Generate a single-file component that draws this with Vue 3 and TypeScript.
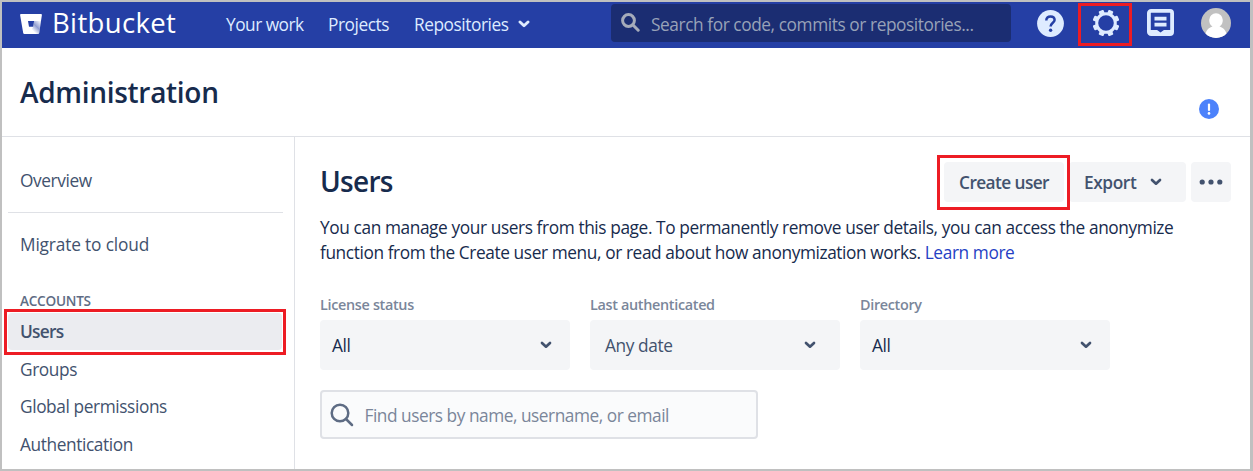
<script setup lang="ts">
interface Filter {
  label: string
  value: string
  kind: string
}

const accountLinks: string[] = ['Groups', 'Global permissions', 'Authentication']
const filters: Filter[] = [
  { label: 'License status', value: 'All', kind: 'status' },
  { label: 'Last authenticated', value: 'Any date', kind: 'date' },
  { label: 'Directory', value: 'All', kind: 'directory' },
]
</script>

<template>
  <div class="page">
    <header class="navbar">
      <svg class="logo" width="22" height="21" viewBox="0 0 22 21">
        <defs>
          <linearGradient id="bucketShade" x1="20" y1="8" x2="12" y2="16" gradientUnits="userSpaceOnUse">
            <stop offset="0" stop-color="#253fa5" stop-opacity="0.1" />
            <stop offset="0.5" stop-color="#253fa5" stop-opacity="0.5" />
            <stop offset="1" stop-color="#253fa5" stop-opacity="0" />
          </linearGradient>
        </defs>
        <path fill-rule="evenodd" d="M1 0H21Q22 0 21.9 1L19.2 19Q19 20 18 20H4.4Q3.4 20 3.2 19L0.1 1Q0 0 1 0ZM8 7L9 12.8H13.2L14.1 7Z" fill="#fff" />
        <path d="M14.1 7H21L19.2 19Q19 20 18 20H9L13.2 12.8Z" fill="url(#bucketShade)" />
      </svg>
      <span class="brand">Bitbucket</span>
      <nav class="nav-links">
        <a class="work">Your work</a>
        <a class="projects">Projects</a>
        <a class="repos">Repositories</a>
        <svg class="nav-chevron" width="12" height="8" viewBox="0 0 12 8"><path d="M2 2l4 3.7L10 2" /></svg>
      </nav>
      <div class="nav-search">
        <svg width="19" height="19" viewBox="0 0 19 19"><circle cx="7.5" cy="7.5" r="5.9" /><path d="M12 12l5.2 5.2" /></svg>
        <span>Search for code, commits or repositories...</span>
      </div>
      <div class="nav-icons">
        <svg class="help" width="27" height="27" viewBox="0 0 27 27">
          <circle cx="13.5" cy="13.5" r="13.4" fill="#deebff" />
          <path d="M9.3 10.5C9.3 7.9 11 6.5 13.5 6.5S17.6 8 17.6 10C17.6 12.8 13.6 12.8 13.6 16.6" fill="none" stroke="#253fa5" stroke-width="2.5" />
          <circle cx="13.6" cy="20.2" r="1.7" fill="#253fa5" />
        </svg>
        <span class="gear-frame">
          <svg width="26" height="26" viewBox="-13 -13 26 26">
            <g fill="#deebff">
              <rect v-for="n in 8" :key="n" x="-2.6" y="-13.4" width="5.2" height="5" rx="1" :transform="`rotate(${n * 45 - 22.5})`" />
            </g>
            <circle r="9.3" fill="none" stroke="#deebff" stroke-width="3" />
          </svg>
        </span>
        <svg class="feed" width="27" height="27" viewBox="0 0 27 27">
          <rect x="1.9" y="1.9" width="23.2" height="23.2" rx="2.2" fill="none" stroke="#deebff" stroke-width="3.8" />
          <path d="M3 21H10.2L13.5 23.6 16.8 21H24V22H18.5L15.5 24.6H11.5L8.5 22H3Z" fill="#deebff" />
          <path d="M3 21.3H24V25H3Z" fill="#deebff" />
          <path d="M10.2 21H16.8L13.5 23.4Z" fill="#253fa5" />
          <path d="M7.5 9.6H19.5M7.5 15.6H19.5" stroke="#deebff" stroke-width="3.8" />
        </svg>
        <svg class="avatar" width="30" height="30" viewBox="0 0 30 30">
          <defs><clipPath id="avatarClip"><circle cx="15" cy="15" r="15" /></clipPath></defs>
          <g clip-path="url(#avatarClip)">
            <rect width="30" height="30" fill="#c1c1c1" />
            <path d="M4 30C4 22 8 20 11.5 18.6 9 17 8.2 14.5 8.2 12A6.8 6.8 0 0 1 21.8 12C21.8 14.5 21 17 18.5 18.6 22 20 26 22 26 30Z" fill="#fff" />
          </g>
        </svg>
      </div>
    </header>

    <section class="title-bar">
      <h1>Administration</h1>
      <svg class="notice" width="20" height="20" viewBox="0 0 20 20">
        <circle cx="10" cy="10" r="10" fill="#4c82fb" />
        <path d="M10 5.6V11" stroke="#fff" stroke-width="2.2" stroke-linecap="round" />
        <circle cx="10" cy="14.4" r="1.3" fill="#fff" />
      </svg>
    </section>

    <div class="body">
      <aside class="sidebar">
        <a class="item overview">Overview</a>
        <div class="divider"></div>
        <a class="item migrate">Migrate to cloud</a>
        <h3>ACCOUNTS</h3>
        <div class="selected"><a class="item active">Users</a></div>
        <a v-for="link in accountLinks" :key="link" class="item">{{ link }}</a>
      </aside>

      <main class="content">
        <div class="heading">
          <h2>Users</h2>
          <div class="actions">
            <div class="create"><button type="button">Create user</button></div>
            <button type="button" class="export">
              <span>Export</span>
              <svg class="chevron" width="12" height="8" viewBox="0 0 12 8"><path d="M2 2l4 3.7L10 2" /></svg>
            </button>
            <button type="button" class="more">
              <svg width="24" height="6" viewBox="0 0 24 6"><circle cx="3.2" cy="3" r="2.6" /><circle cx="12" cy="3" r="2.6" /><circle cx="20.8" cy="3" r="2.6" /></svg>
            </button>
          </div>
        </div>
        <div class="description">
          <p class="line-one">You can manage your users from this page. To permanently remove user details, you can access the anonymize</p>
          <p class="line-two">function from the Create user menu, or read about how anonymization works. <a>Learn more</a></p>
        </div>
        <div class="filters">
          <div v-for="filter in filters" :key="filter.kind" class="filter" :class="filter.kind">
            <label>{{ filter.label }}</label>
            <div class="select">
              <span>{{ filter.value }}</span>
              <svg class="chevron" width="12" height="8" viewBox="0 0 12 8"><path d="M2 2l4 3.7L10 2" /></svg>
            </div>
          </div>
        </div>
        <div class="user-search">
          <svg width="24" height="24" viewBox="0 0 24 24"><circle cx="10" cy="10" r="8.3" /><path d="M16 16l6 6" /></svg>
          <span>Find users by name, username, or email</span>
        </div>
      </main>
    </div>
  </div>
</template>

<style>
body { margin: 0; overflow: hidden; }
</style>

<style scoped>
.page {
  box-sizing: border-box;
  width: 1253px;
  height: 471px;
  border: 2px solid #c0c0c0;
  border-right-width: 3px;
  background: #fff;
  overflow: hidden;
  display: flex;
  flex-direction: column;
  font-family: "Open Sans", "Noto Sans", sans-serif;
  font-size: 17.3px;
  letter-spacing: -0.4px;
  color: #172b4d;
}
.page * { box-sizing: border-box; }
h1, h2, h3, p { margin: 0; }
svg { flex: none; display: block; }
span, a, h1, h2, h3, p, label { white-space: nowrap; }

.navbar { height: 46px; flex: none; display: flex; background: #253fa5; color: #deebff; }
.logo { margin: 12px 0 0 18px; }
.brand { width: 174px; margin-left: 10px; font-size: 27.5px; font-weight: 500; letter-spacing: 0.35px; line-height: 41px; color: #fff; }
.nav-links { width: 385px; display: flex; line-height: 45px; }
.work { width: 102px; letter-spacing: -0.5px; }
.projects { width: 86px; letter-spacing: -0.45px; }
.repos { width: 104px; letter-spacing: -0.45px; }
.nav-chevron { margin-top: 18px; fill: none; stroke: #deebff; stroke-width: 2.9; stroke-linecap: round; stroke-linejoin: round; }
.nav-search { width: 400px; height: 38px; margin-top: 2px; padding-left: 10px; display: flex; background: #1b2d72; border-radius: 4px; color: #98a2b8; line-height: 41px; }
.nav-search svg { margin: 9px 11px 0 0; fill: none; stroke: #a5abba; stroke-width: 3; stroke-linecap: round; }
.nav-search span { letter-spacing: -0.42px; }
.nav-icons { display: flex; padding-left: 26px; }
.help { margin-top: 7.5px; }
.gear-frame { width: 54px; height: 43px; margin: 1px 0 0 14px; padding: 4px 0 0 12px; border: 3px solid #ed1c24; }
.feed { margin: 7px 0 0 15px; }
.avatar { margin: 6px 0 0 27px; }

.title-bar { height: 89px; flex: none; display: flex; justify-content: space-between; border-bottom: 1px solid #dfe1e6; padding: 0 31px 0 18px; }
h1, h2 { font-size: 28px; font-weight: 600; letter-spacing: -0.3px; }
h1 { line-height: 88px; }
.notice { margin-top: 51px; }

.body { display: flex; flex: 1; min-height: 0; }
.sidebar { width: 293px; flex: none; border-right: 1px solid #dfe1e6; padding: 25px 11px 0 6px; color: #42526e; }
.item { display: block; height: 37.5px; line-height: 37.5px; padding-left: 12px; }
.migrate { position: relative; top: -1px; letter-spacing: -0.15px; }
.divider { height: 1px; margin: 12.5px 0 13.5px; background: #dfe1e6; }
h3 { height: 21px; margin: 26px 0 -2px; padding-left: 12px; font-size: 13.6px; font-weight: 600; letter-spacing: -0.25px; line-height: 21px; color: #5e6c84; }
.selected { width: 282px; height: 46px; margin: 0 0 -4.5px -4px; border: 3px solid #ed1c24; padding: 1px; }
.active { height: 37px; background: #ebecf0; border-radius: 4px; font-weight: 600; letter-spacing: -0.75px; }

.content { flex: 1; padding: 18px 19px 0 25px; }
.heading { height: 55px; display: flex; justify-content: space-between; }
h2 { line-height: 53px; letter-spacing: -0.7px; }
.actions { display: flex; }
.create { width: 133px; height: 55px; padding: 4px; border: 3px solid #ed1c24; z-index: 1; }
button { height: 40px; border: 0; border-radius: 4px; padding: 0; font: inherit; font-weight: 600; letter-spacing: inherit; color: #42526e; background: #f4f5f7; }
.create button { width: 120px; letter-spacing: -0.6px; }
.export { width: 117px; margin: 7px 5px 0 -1px; padding-left: 15px; display: flex; align-items: center; }
.export span { width: 66px; text-align: left; }
.chevron { fill: none; stroke: #42526e; stroke-width: 2.7; stroke-linecap: round; stroke-linejoin: round; }
.more { width: 40px; margin-top: 7px; padding-left: 8px; }
.more svg { fill: #42526e; }
.description { padding-top: 5px; line-height: 25px; }
.description a { color: #253fc4; }
.filters { display: flex; gap: 20px; margin-top: 30px; }
.filter { width: 250px; }
label { display: block; height: 25px; line-height: 19px; font-size: 14.4px; font-weight: 600; letter-spacing: -0.32px; color: #7a869a; }
.select { height: 50px; padding: 0 18px 0 12px; display: flex; justify-content: space-between; align-items: center; border-radius: 4px; background: #f4f5f7; }
.date .select { padding: 0 24px 0 15px; color: #42526e; }
.user-search { width: 438px; height: 49px; margin-top: 20px; border: 2px solid #dfe1e6; border-radius: 4px; background: #fafbfc; padding-left: 8px; display: flex; align-items: center; letter-spacing: -0.47px; color: #7a869a; }
.user-search span { padding-top: 2px; }
.user-search svg { margin-right: 10.5px; fill: none; stroke: #5e6c84; stroke-width: 2.5; stroke-linecap: round; }
</style>
